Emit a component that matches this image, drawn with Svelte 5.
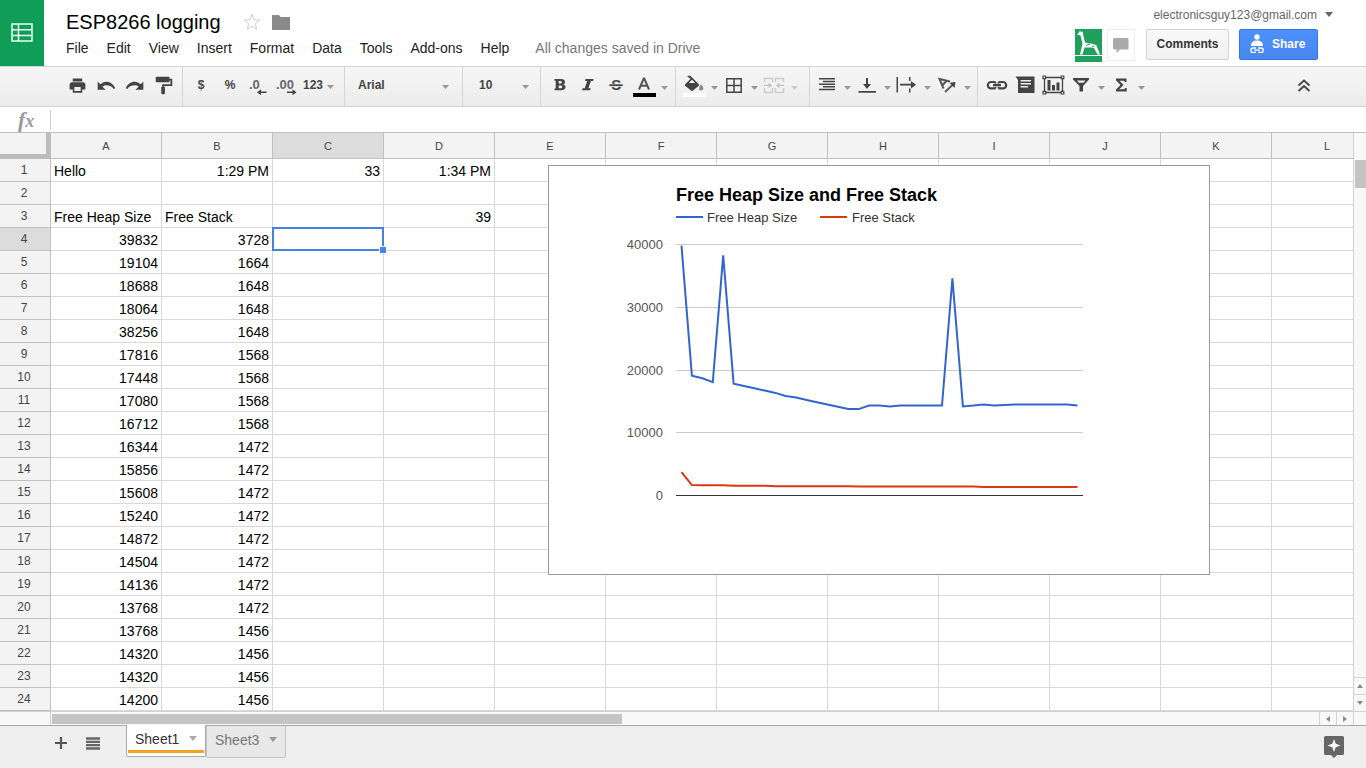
<script>
  const menus = ['File', 'Edit', 'View', 'Insert', 'Format', 'Data', 'Tools', 'Add-ons', 'Help'];
  const columns = ['A', 'B', 'C', 'D', 'E', 'F', 'G', 'H', 'I', 'J', 'K', 'L'];

  const heap = [
    39832, 19104, 18688, 18064, 38256, 17816, 17448, 17080, 16712, 16344, 15856, 15608, 15240,
    14872, 14504, 14136, 13768, 13768, 14320, 14320, 14200, 14320, 14320, 14320, 14320, 14320,
    34600, 14200, 14320, 14500, 14320, 14400, 14500, 14500, 14500, 14500, 14500, 14500, 14320
  ];
  const stack = [
    3728, 1664, 1648, 1648, 1648, 1568, 1568, 1568, 1568, 1472, 1472, 1472, 1472, 1472, 1472,
    1472, 1472, 1456, 1456, 1456, 1456, 1456, 1456, 1456, 1456, 1456, 1456, 1456, 1456, 1360,
    1360, 1360, 1360, 1360, 1360, 1360, 1360, 1360, 1360
  ];

  const rows = Array.from({ length: 24 }, (_, i) => {
    const cells = Array(12).fill('');
    if (i === 0) cells.splice(0, 4, 'Hello', '1:29 PM', '33', '1:34 PM');
    if (i === 2) cells.splice(0, 4, 'Free Heap Size', 'Free Stack', '', '39');
    if (i > 2) cells.splice(0, 2, String(heap[i - 3]), String(stack[i - 3]));
    return cells;
  });
  let selRow = $state(3);
  let selCol = $state(2);

  const isNumber = (v) => /^\d/.test(v);
  const chartX = (i) => 132.5 + (i * 396) / 38;
  const chartY = (v) => 329.5 - (v * 251) / 40000;
  const line = (data) => data.map((v, i) => `${chartX(i).toFixed(1)},${chartY(v).toFixed(1)}`).join(' ');
  const ticks = [40000, 30000, 20000, 10000, 0];

  const T = 'font-family="Liberation Sans, Arial, sans-serif" font-weight="700" stroke="none"';
  const icons = {
    print: [19, '<path d="M19 8H5c-1.66 0-3 1.34-3 3v6h4v4h12v-4h4v-6c0-1.66-1.34-3-3-3zm-3 11H8v-5h8v5zM18 3H6v4h12V3z"/>'],
    undo: [20, '<path d="M12.500 7c-2.800 0-5.200 1.200-7 3L2 7v9.500h9.500l-3.800-3.700c1.300-1.100 2.700-1.600 4.300-1.600 3.540 0 6.800 1 9.200 4.300l1.800-.7C21 10 17.150 7 12.500 7z"/>'],
    redo: [20, '<path d="M11.500 7c2.800 0 5.200 1.200 7 3L22 7v9.500h-9.500l3.800-3.700c-1.300-1.100-2.700-1.600-4.300-1.600-3.540 0-6.800 1-9.200 4.300l-1.800-.7C3 10 6.850 7 11.500 7z"/>'],
    paint: [22, '<path d="M18 4V3c0-.55-.45-1-1-1H4c-.55 0-1 .45-1 1v4c0 .55.45 1 1 1h13c.55 0 1-.45 1-1V6h1v4H10v3H9v7c0 .55.45 1 1 1h2c.55 0 1-.45 1-1v-7h-1v-1h9V4h-3z"/>'],
    decLess: [24, `<text x="2" y="15" font-size="13" fill="#666" ${T}>.0</text><path d="M10 18.200l4-3v2.200h5.500v1.700H14v2.200z"/>`],
    decMore: [24, `<text x="0" y="15" font-size="13" fill="#666" ${T}>.00</text><path d="M20.500 18.200l-4-3v2.200H11v1.700h5.500v2.200z"/>`],
    bold: [24, '<path fill-rule="evenodd" d="M6.500 5H13c2.600 0 4 1.200 4 3 0 1.200-.6 2-1.700 2.400 1.400.4 2.200 1.300 2.200 2.600 0 2-1.500 3.200-4.300 3.200H6.500v-1.700h1.200V6.700H6.500zM10.700 7v2.600h1.600c1 0 1.600-.4 1.600-1.300S13.300 7 12.300 7zm0 4.500v2.800h1.700c1.100 0 1.800-.5 1.800-1.400s-.7-1.400-1.800-1.400z"/>'],
    italic: [24, '<path d="M9.500 5h8l-.4 2h-2.200l-2.500 7.200h2.200l-.5 2h-8l.4-2h2.200L11.200 7H9z"/>'],
    strike: [24, `<text x="7.300" y="16.200" font-size="15" ${T}>S</text><path stroke="#eee" d="M5 10.200h14v2H5z"/><path d="M5.500 10.400h13V12h-13z"/>`],
    color: [24, `<path d="M1 19h23v4H1z" fill="#000"/><path fill="none" stroke="#555" stroke-width="2" d="M7 15.500L11.700 4.500h.600L17 15.500M8.500 11.700h7"/>`],
    fill: [24, '<path d="M16.560 9.940L8.620 2 7.210 1.410 5 2.500l3.590 2.290-5.150 5.150c-.59.59-.59 1.540 0 2.120l5.500 4.500c.59.59 1.540.59 2.120 0l5.500-4.500c.59-.58.59-1.530 0-2.120zM6.800 9L10 5.800 13.200 9z"/><path fill="#888" d="M19 10.500s-2 2.170-2 4c0 1.300.9 2 2 2s2.300-.7 2.300-2c0-1.830-2.300-4-2.300-4z"/><path fill="#fff" d="M1 19h23v4H1z"/>'],
    borders: [24, '<path fill="none" stroke="#444" stroke-width="1.500" d="M4.800 4.800h14.400v13.400H4.800zM12 4.800v13.400M4.800 11.500h14.400"/>'],
    merge: [24, '<path fill="none" stroke="#ccc" stroke-width="1.500" d="M2.500 8V4.500h8V8M10.500 14v4.500h-8V14M13.500 8V4.500h8V8M21.500 14v4.500h-8V14"/><path fill="#c4c4c4" d="M2 10.700h4.500V8.500L10 11.400l-3.500 2.900v-2.200H2zM22 10.700h-4.500V8.500L14 11.400l3.500 2.900v-2.200H22z"/>'],
    align: [24, '<path d="M4 4h16v1.500H4zM8 6.700h12v1.500H8zM4 9.400h16v1.500H4zM8 12.100h12v1.500H8zM4 14.800h16v1.500H4z"/>'],
    valign: [24, '<path d="M11 4h2v6h3l-4 5-4-5h3zM3.500 17h17.500v1.800H3.500z"/>'],
    wrap: [24, '<path d="M1.500 3H3v15.500H1.500zM5 9.800h11V7l5 3.700-5 3.700v-2.800H5zM14 3h1.500v4H14zM14 14.500h1.500v4H14z"/>'],
    rotate: [24, '<g fill="none" stroke="#555"><path stroke-width="2" d="M8.500 14.500L4.500 5l10.500 2.500M7.200 11.500l4.200-4.500"/><path stroke-width="1.800" d="M10 18l8-7.500"/></g><path d="M20.500 8l-1 6-5-5.200z"/>'],
    link: [24, '<path fill="none" stroke="#444" stroke-width="2.200" d="M10.500 8H6a3.200 3.200 0 0 0 0 6.400h4.500M13.500 8H18a3.200 3.200 0 0 1 0 6.400h-4.500M8 11.200h8"/><path fill="none" stroke="#444" stroke-width="1.600" d="M10.500 8v1.700M10.500 12.700v1.700M13.500 8v1.700M13.500 12.700v1.700"/>'],
    comment: [24, '<path d="M2.500 2.500h19V19H5V6z"/><path stroke="#eee" stroke-width="1.500" d="M7.500 6.800H18M7.500 9.800H18M7.500 12.800h7.500"/>'],
    chart: [24, '<path fill="none" stroke="#444" stroke-width="1.300" d="M3.500 3.500h18v15h-18z"/><path d="M6.500 6h3v10.500h-3zM11 11h3v5.500h-3zM15.500 8.500h3v8h-3z"/><g fill="#eee" stroke="#444" stroke-width="1.200"><path d="M2 2h2.600v2.600H2zM20.200 2h2.600v2.600h-2.600zM2 17.400h2.600V20H2zM20.200 17.400h2.600V20h-2.600z"/></g>'],
    filter: [24, '<path fill-rule="evenodd" d="M4 4h16v1.500l-6 6.500v5.500h-3.500V12L4 5.500zM8 6.500l2 2.200h4.500l2-2.200z"/>'],
    sigma: [24, '<path d="M7 4.500h10.500V8h-1.700l-.5-1.200h-4.800l4 4.200-4.300 4.300h5.300l.5-1.300h1.700v3.500H7v-1.900L11.500 11 7 6.300z"/>'],
    collapse: [24, '<path fill="none" stroke="#444" stroke-width="1.800" d="M6.500 11.500l5.500-5 5.500 5M6.500 17l5.500-5 5.500 5"/>']
  };
</script>

{#snippet icon(name)}
  <svg width={icons[name][0]} height={icons[name][0]} viewBox="0 0 24 24" fill="#444" aria-hidden="true">{@html icons[name][1]}</svg>
{/snippet}

{#snippet caret()}
  <svg class="caret" width="7" height="4" viewBox="0 0 7 4" aria-hidden="true"><path d="M0 0h7L3.500 4z" fill="currentColor" /></svg>
{/snippet}

{#snippet tool(name, label)}
  <button class="tool" aria-label={label}>{@render icon(name)}</button>
{/snippet}

{#snippet split(name, label)}
  <button class="tool" aria-label={label}>{@render icon(name)}</button>
  <button class="drop" class:dim={name === 'merge'} aria-label="{label} options">{@render caret()}</button>
{/snippet}

<div class="app">
  <header>
    <a class="logo" href="#home" aria-label="Sheets home">
      <svg width="22" height="20" viewBox="0 0 22 20" fill="none" stroke="#e8fff2" stroke-width="1.500"><path d="M1 1h20v17H1zM1 6.700h20M1 12.400h20M7.500 1v17" /></svg>
    </a>
    <div class="heading">
      <div class="title-row">
        <h1>ESP8266 logging</h1>
        <button class="plain" aria-label="Star">
          <svg width="18" height="18" viewBox="0 0 18 18" fill="none" stroke="#ccc"><path d="M9 1.500l2.100 5.200 5.500.4-4.200 3.600 1.300 5.500L9 13.200l-4.700 3 1.300-5.500L1.400 7.100l5.500-.4z" /></svg>
        </button>
        <button class="plain" aria-label="Move to folder">
          <svg width="20" height="18" viewBox="0 0 20 18" fill="#8a8a8a"><path d="M1 2h7l1.500 2H19v13H1z" /></svg>
        </button>
      </div>
      <nav>
        {#each menus as m}<button class="menu">{m}</button>{/each}
        <span class="saved">All changes saved in Drive</span>
      </nav>
    </div>
    <div class="account">
      <button class="email">electronicsguy123@gmail.com <svg width="8" height="5" viewBox="0 0 8 5"><path d="M0 0h8L4 5z" fill="#666" /></svg></button>
      <div class="actions">
        <svg class="avatar" width="27" height="33" viewBox="0 0 27 33">
          <path d="M0 0h27v33H0z" fill="#1fa05c" />
          <path d="M0 26.500h27" stroke="#fff" />
          <path d="M2 5.500L4 3.500 5 1.500l1 1.700 1.500-1L8 5l2 8.500 8.500 1.500 3 1.500L25 25.500h-2.500l-3.500-6.500-3-.5-6.500 0L7.500 25.500H5l2.500-11L5.500 6.500z" fill="#fff" />
          <path d="M11 16.500l4-1.500M17 17.500l2-.5" stroke="#1fa05c" />
        </svg>
        <button class="chat" aria-label="Chat">
          <svg width="16" height="15" viewBox="0 0 16 15" fill="#aaa"><path d="M1.500 0h12.500q1.500 0 1.500 1.500v8.500q0 1.500-1.500 1.500H7L3.500 15v-3.500h-2Q0 11.500 0 10V1.500Q0 0 1.500 0z" /></svg>
        </button>
        <button class="btn comments">Comments</button>
        <button class="btn share">
          <svg width="16" height="20" viewBox="0 0 16 20" fill="#fff">
            <circle cx="8" cy="3" r="2.700" /><path d="M2 12c0-4 2.500-5.500 6-5.500s6 1.500 6 5.500z" />
            <path d="M7 14H4a2.200 2.200 0 0 0 0 4.400h3M9 14h3a2.200 2.200 0 0 1 0 4.400H9M5 16.200h6" fill="none" stroke="#fff" stroke-width="1.300" />
          </svg>
          Share
        </button>
      </div>
    </div>
  </header>

  <div class="toolbar" role="toolbar" aria-label="Formatting">
    <div class="group first">
      {@render tool('print', 'Print')}{@render tool('undo', 'Undo')}{@render tool('redo', 'Redo')}{@render tool('paint', 'Paint format')}
    </div>
    <div class="group numbers">
      <button class="tool label">$</button><button class="tool label">%</button>
      {@render tool('decLess', 'Decrease decimal places')}{@render tool('decMore', 'Increase decimal places')}
      <button class="formats label">123 {@render caret()}</button>
    </div>
    <div class="group font"><button class="picker label">Arial {@render caret()}</button></div>
    <div class="group size"><button class="picker label">10 {@render caret()}</button></div>
    <div class="group text">
      {@render tool('bold', 'Bold')}{@render tool('italic', 'Italic')}{@render tool('strike', 'Strikethrough')}{@render split('color', 'Text color')}
    </div>
    <div class="group cellfmt">
      {@render split('fill', 'Fill color')}{@render split('borders', 'Borders')}{@render split('merge', 'Merge cells')}
    </div>
    <div class="group aligns">
      {@render split('align', 'Horizontal align')}{@render split('valign', 'Vertical align')}{@render split('wrap', 'Text wrapping')}{@render split('rotate', 'Text rotation')}
    </div>
    <div class="group inserts">
      {@render tool('link', 'Insert link')}{@render tool('comment', 'Insert comment')}{@render tool('chart', 'Insert chart')}{@render split('filter', 'Filter')}{@render split('sigma', 'Functions')}
    </div>
    <div class="group end">{@render tool('collapse', 'Hide menus')}</div>
  </div>

  <div class="formula">
    <label for="fx"><i>f</i>x</label>
    <input id="fx" type="text" />
  </div>

  <main>
    <div class="sheet">
      <table>
        <thead>
          <tr>
            <th class="corner" aria-label="Select all"></th>
            {#each columns as c, i}<th scope="col" class:on={i === selCol}>{c}</th>{/each}
          </tr>
        </thead>
        <tbody>
          {#each rows as cells, r}
            <tr>
              <th scope="row" class:on={r === selRow}>{r + 1}</th>
              {#each cells as v, c}
                <td class:num={isNumber(v)} onclick={() => { selRow = r; selCol = c; }}>{v}{#if r === selRow && c === selCol}<span class="selection"></span>{/if}</td>
              {/each}
            </tr>
          {/each}
        </tbody>
      </table>

      <svg class="plot" width="660" height="408" viewBox="0 0 660 408" role="img" aria-label="Free Heap Size and Free Stack">
        <text class="plot-title" x="127" y="35">Free Heap Size and Free Stack</text>
        <g stroke-width="2">
          <path d="M127 51h27" stroke="#3366cc" />
          <path d="M271 51h27" stroke="#dc3912" />
        </g>
        <text class="legend" x="158" y="56">Free Heap Size</text>
        <text class="legend" x="303" y="56">Free Stack</text>
        {#each ticks as t}
          <path d="M127 {Math.floor(chartY(t)) + 0.5}h407" stroke={t ? '#ccc' : '#333'} />
          <text class="tick" x="114" y={Math.floor(chartY(t)) + 5}>{t}</text>
        {/each}
        <polyline points={line(heap)} fill="none" stroke="#3366cc" stroke-width="2" />
        <polyline points={line(stack)} fill="none" stroke="#dc3912" stroke-width="2" />
      </svg>
    </div>

    <div class="vbar">
      <div class="vtrack"><div class="vthumb"></div></div>
      <button aria-label="Scroll up"><svg width="6" height="4" viewBox="0 0 6 4"><path d="M0 4h6L3 0z" /></svg></button>
      <button aria-label="Scroll down"><svg width="6" height="4" viewBox="0 0 6 4"><path d="M0 0h6L3 4z" /></svg></button>
    </div>

    <div class="hbar">
      <div class="htrack"><div class="hthumb"></div></div>
      <button aria-label="Scroll left"><svg width="4" height="6" viewBox="0 0 4 6"><path d="M4 0v6L0 3z" /></svg></button>
      <button aria-label="Scroll right"><svg width="4" height="6" viewBox="0 0 4 6"><path d="M0 0v6l4-3z" /></svg></button>
    </div>
    <div class="nook"></div>
  </main>

  <footer>
    <button class="foot add" aria-label="Add sheet"><svg width="12" height="12" viewBox="0 0 12 12"><path d="M6 0v12M0 6h12" stroke="#555" stroke-width="2.200" /></svg></button>
    <button class="foot" aria-label="All sheets"><svg width="14" height="13" viewBox="0 0 14 13"><path d="M0 1.500h14M0 4.800h14M0 8.200h14M0 11.500h14" stroke="#666" stroke-width="2.300" /></svg></button>
    <div class="tabs">
      <button class="tab active">Sheet1 <svg width="8" height="5" viewBox="0 0 8 5"><path d="M0 0h8L4 5z" fill="#aaa" /></svg></button>
      <button class="tab">Sheet3 <svg width="8" height="5" viewBox="0 0 8 5"><path d="M0 0h8L4 5z" fill="#999" /></svg></button>
    </div>
    <button class="explore" aria-label="Explore">
      <svg width="20" height="22" viewBox="0 0 20 22"><path d="M1.500 0h17Q20 0 20 1.500v16q0 1.500-1.500 1.500H13l-3 3-3-3H1.500Q0 19 0 17.500v-16Q0 0 1.500 0z" fill="#666" /><path d="M10 3l1.700 4.800L16.500 9.500l-4.800 1.700L10 16l-1.700-4.800L3.500 9.500l4.800-1.700z" fill="#fff" /></svg>
    </button>
  </footer>
</div>

<style>
  :global(body) { margin: 0; }
  .app {
    display: flex;
    flex-direction: column;
    height: 100vh;
    overflow: hidden;
    background: #fff;
    color: #222;
    font: 14px "Liberation Sans", Arial, sans-serif;
  }
  button {
    margin: 0;
    padding: 0;
    border: 0;
    background: none;
    color: inherit;
    font: inherit;
    white-space: nowrap;
    cursor: pointer;
  }
  svg { display: block; flex: none; }

  header { display: flex; height: 66px; flex: none; }
  .logo {
    display: flex;
    align-items: center;
    justify-content: center;
    width: 44px;
    background: #0f9d58;
  }
  .heading { flex: 1; padding: 10px 0 0 22px; }
  .title-row { display: flex; align-items: center; height: 24px; }
  h1 { margin: 0 22px 0 0; font-size: 20px; font-weight: 400; color: #000; }
  .plain { margin-right: 10px; }
  nav { display: flex; align-items: center; gap: 18px; height: 28px; white-space: nowrap; }
  .saved { margin-left: 8px; color: #777; }
  .account { display: flex; flex-direction: column; align-items: flex-end; }
  .email {
    display: flex;
    align-items: center;
    gap: 8px;
    height: 29px;
    padding-right: 33px;
    font-size: 12px;
    color: #666;
  }
  .actions { display: flex; align-items: flex-start; margin-right: 48px; }
  .chat {
    display: flex;
    align-items: center;
    justify-content: center;
    width: 28px;
    height: 32px;
    margin: 0 11px 0 5px;
    border: 1px solid #eee;
  }
  .btn {
    height: 31px;
    padding-bottom: 2px;
    border: 1px solid #d4d4d4;
    border-radius: 2px;
    background: linear-gradient(#f8f8f8, #f1f1f1);
    font-size: 12px;
    font-weight: 700;
  }
  .comments { width: 83px; color: #333; }
  .share {
    display: flex;
    align-items: center;
    gap: 7px;
    width: 79px;
    margin-left: 10px;
    padding-left: 9px;
    border-color: #3079ed;
    background: linear-gradient(#4d90fe, #4787ed);
    color: #fff;
  }

  .toolbar {
    display: flex;
    flex: none;
    box-sizing: border-box;
    height: 41px;
    border: solid #d3d3d3;
    border-width: 1px 0;
    background: linear-gradient(#f6f6f6, #ececec);
    font-size: 12px;
    font-weight: 700;
    color: #444;
  }
  .group {
    display: flex;
    align-items: center;
    box-sizing: border-box;
    flex: none;
    padding-bottom: 2px;
    border-right: 1px solid #d5d5d5;
  }
  .tool { display: flex; align-items: center; justify-content: center; width: 28px; height: 28px; }
  .drop { display: flex; align-items: center; justify-content: center; width: 12px; height: 28px; }
  .label { box-sizing: border-box; padding-bottom: 2px; }
  .caret { color: #999; }
  .drop .caret, .label .caret { margin-top: 4px; }
  .dim .caret { color: #ccc; }
  .first { width: 183px; padding-left: 63px; gap: 1px; }
  .numbers { width: 162px; padding-left: 4px; gap: 1px; }
  .formats { display: flex; align-items: center; gap: 4px; height: 28px; }
  .picker { display: flex; align-items: center; justify-content: space-between; width: 100%; height: 28px; }
  .font { width: 118px; padding-left: 13px; padding-right: 13px; }
  .size { width: 78px; padding-left: 16px; padding-right: 11px; }
  .text { width: 135px; padding-left: 5px; }
  .cellfmt { width: 134px; padding-left: 4px; }
  .aligns { width: 168px; padding-left: 3px; }
  .inserts { padding-left: 5px; border: 0; }
  .end { margin-left: auto; padding-right: 48px; border: 0; }

  .formula {
    display: flex;
    align-items: center;
    flex: none;
    box-sizing: border-box;
    height: 26px;
    border-bottom: 1px solid #c0c0c0;
  }
  .formula label {
    width: 51px;
    height: 20px;
    box-sizing: border-box;
    padding-left: 18px;
    border-right: 1px solid #ccc;
    color: #999;
    font: italic 700 18px/20px "Liberation Serif", serif;
  }
  .formula i { font-size: 22px; line-height: 20px; }
  .formula input { flex: 1; height: 20px; border: 0; outline: 0; font: inherit; }

  main {
    display: grid;
    grid-template: minmax(0, 1fr) 14px / minmax(0, 1fr) 13px;
    flex: 1;
    min-height: 0;
  }
  .sheet { position: relative; overflow: hidden; }
  table { width: 1383px; table-layout: fixed; border-collapse: separate; border-spacing: 0; }
  th, td {
    box-sizing: border-box;
    height: 23px;
    padding: 0 3px;
    border: solid #d9d9d9;
    border-width: 0 1px 1px 0;
    line-height: 20px;
    white-space: nowrap;
  }
  td { position: relative; padding-top: 2px; color: #000; }
  .num { text-align: right; }
  th {
    border-color: #c0c0c0;
    background: #f3f3f3;
    color: #444;
    font-size: 12px;
    font-weight: 400;
  }
  tbody th { padding-right: 5px; }
  thead th { width: 111px; height: 26px; font-size: 11px; }
  thead .corner { width: 51px; border-color: #bcbcbc; border-width: 0 5px 5px 0; }
  th.on { background: #dcdcdc; }
  .selection { position: absolute; z-index: 1; inset: -1px; border: 2px solid #4285e0; pointer-events: none; }
  .selection::after {
    content: "";
    position: absolute;
    right: -4px;
    bottom: -4px;
    width: 6px;
    height: 6px;
    border: solid #fff;
    border-width: 1px 0 0 1px;
    background: #4285f4;
  }
  .plot {
    position: absolute;
    z-index: 2;
    left: 548px;
    top: 32px;
    border: 1px solid #999;
    background: #fff;
  }
  .plot-title { font-size: 18px; font-weight: 700; fill: #000; }
  .legend { font-size: 13px; fill: #333; }
  .tick { font-size: 13px; fill: #555; text-anchor: end; }

  .vbar { display: flex; flex-direction: column; border-left: 1px solid #d0d0d0; background: #f8f8f8; }
  .vtrack { flex: 1; padding: 27px 0 0 1px; }
  .vthumb { height: 28px; background: #c4c4c4; }
  .vbar button, .hbar button { display: flex; align-items: center; justify-content: center; }
  .vbar button { height: 17px; border-top: 1px solid #d5d5d5; }
  .vbar path, .hbar path { fill: #888; }
  .hbar { display: flex; box-sizing: border-box; border-top: 1px solid #d0d0d0; background: #f8f8f8; }
  .htrack { flex: 1; margin-left: 50px; padding: 2px 0 1px 1px; border-left: 1px solid #d0d0d0; }
  .hthumb { width: 45%; height: 10px; background: #c4c4c4; }
  .hbar button { width: 17px; border-left: 1px solid #d5d5d5; }
  .nook { border: solid #d0d0d0; border-width: 1px 0 0 1px; background: #f8f8f8; }

  footer {
    display: flex;
    align-items: flex-start;
    flex: none;
    box-sizing: border-box;
    height: 43px;
    padding: 0 22px 0 50px;
    border-top: 1px solid #a8a8a8;
    background: #eee;
  }
  .foot { display: flex; align-items: center; justify-content: center; width: 32px; height: 34px; }
  .add { width: 22px; margin-right: 5px; }
  .tabs { display: flex; flex: 1; margin-left: 17px; }
  .tab {
    display: flex;
    align-items: center;
    justify-content: space-between;
    box-sizing: border-box;
    width: 80px;
    height: 32px;
    padding: 0 8px 4px;
    border: 1px solid #c4c4c4;
    border-top: 0;
    border-radius: 0 0 2px 2px;
    background: #e8e8e8;
    color: #777;
  }
  .active {
    position: relative;
    margin-top: -1px;
    border-color: #aaa;
    background: #fff;
    color: #333;
  }
  .active::after {
    content: "";
    position: absolute;
    left: 1px;
    right: 1px;
    bottom: 3px;
    height: 3px;
    background: #f0a422;
  }
  .explore { margin-top: 10px; }
</style>
